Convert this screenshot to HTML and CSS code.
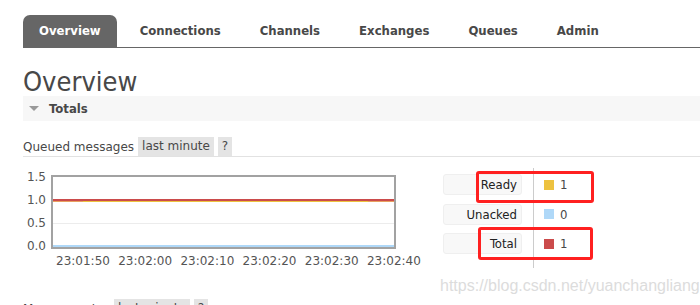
FILE: index.html
```html
<!DOCTYPE html>
<html lang="en">
<head>
    <meta charset="UTF-8">
    <meta name="viewport" content="width=device-width, initial-scale=1.0">
    <title>RabbitMQ Management</title>
    <link rel="stylesheet" href="styles.css">
</head>
<body>
    <div class="main">
        <ul class="tabs">
            <li class="active">Overview</li>
            <li>Connections</li>
            <li>Channels</li>
            <li>Exchanges</li>
            <li>Queues</li>
            <li>Admin</li>
        </ul>

        <h1>Overview</h1>

        <div class="section-title"><span class="arrow"></span>Totals</div>

        <div class="updatable">
            <span class="label">Queued messages</span>
            <span class="pill">last minute</span>
            <span class="pill">?</span>
        </div>

        <div class="chart-row">
            <div class="chart">
                <div class="plot">
                    <div class="y-axis">
                        <span>1.5</span>
                        <span>1.0</span>
                        <span>0.5</span>
                        <span>0.0</span>
                    </div>
                    <div class="plot-box">
                        <svg width="341" height="70" viewBox="0 0 341 70">
                            <line x1="0" y1="46.5" x2="341" y2="46.5" stroke="#ececec" stroke-width="1"/>
                            <line x1="0" y1="24.5" x2="341" y2="24.5" stroke="#e8a060" stroke-width="1"/>
                            <line x1="30" y1="24.5" x2="315" y2="24.5" stroke="#edc240" stroke-width="1"/>
                            <line x1="0" y1="23" x2="341" y2="23" stroke="#cb4b4b" stroke-width="2"/>
                            <line x1="0" y1="69" x2="341" y2="69" stroke="#afd8f8" stroke-width="2"/>
                        </svg>
                    </div>
                </div>
                <div class="x-axis">
                    <span>23:01:50</span>
                    <span>23:02:00</span>
                    <span>23:02:10</span>
                    <span>23:02:20</span>
                    <span>23:02:30</span>
                    <span>23:02:40</span>
                </div>
            </div>

            <div class="legend">
                <div class="legend-labels">
                    <div class="legend-label">Ready</div>
                    <div class="legend-label">Unacked</div>
                    <div class="legend-label">Total</div>
                </div>
                <div class="legend-values">
                    <div class="legend-value"><span class="swatch ready"></span>1</div>
                    <div class="legend-value"><span class="swatch unacked"></span>0</div>
                    <div class="legend-value"><span class="swatch total"></span>1</div>
                </div>
                <div class="mark mark-ready"></div>
                <div class="mark mark-total"></div>
                <div class="watermark">https://blog.csdn.net/yuanchangliang</div>
            </div>
        </div>

        <div class="updatable rates">
            <span class="label">Message rates</span>
            <span class="pill">last minute</span>
            <span class="pill">?</span>
        </div>
    </div>
</body>
</html>
```

FILE: styles.css
```css
body {
    margin: 0;
    padding: 0;
    background: #fff;
    color: #484848;
    font-family: "DejaVu Sans Condensed", "DejaVu Sans", Verdana, sans-serif;
    font-size: 13px;
    overflow: hidden;
}
.main {
    padding: 15px 0 0 23px;
}
.tabs {
    display: flex;
    gap: 7px;
    margin: 0;
    padding: 0;
    list-style: none;
    border-bottom: 1px solid #666;
}
.tabs li {
    height: 32px;
    line-height: 32px;
    padding: 0 16px;
    font-weight: bold;
    font-size: 13px;
    color: #484848;
    border-radius: 7px 7px 0 0;
}
.tabs li.active {
    background: #666;
    color: #fff;
}
h1 {
    margin: 19px 0 0;
    font-size: 27px;
    line-height: 29px;
    font-weight: normal;
    color: #484848;
}
.section-title {
    display: flex;
    align-items: center;
    height: 25px;
    background: #f7f7f7;
    font-weight: bold;
    font-size: 13px;
    padding-left: 6px;
}
.arrow {
    width: 0;
    height: 0;
    border-left: 5px solid transparent;
    border-right: 5px solid transparent;
    border-top: 5px solid #999;
    margin-right: 10px;
}
.updatable {
    display: flex;
    align-items: center;
    gap: 4px;
    height: 19px;
    margin-top: 16px;
    border-bottom: 1px solid #e2e2e2;
    font-family: "DejaVu Sans", Verdana, sans-serif;
    font-size: 12px;
}
.updatable.rates {
    margin-top: 31px;
}
.pill {
    background: #e4e4e4;
    line-height: 19px;
    padding: 0 4px;
}
.chart-row {
    display: flex;
    margin-top: 12px;
}
.chart {
    width: 420px;
    padding-top: 6px;
}
.plot {
    display: flex;
}
.y-axis {
    width: 23px;
    padding-right: 5px;
    display: flex;
    flex-direction: column;
    justify-content: space-between;
    align-items: flex-end;
    font-family: "DejaVu Sans", Verdana, sans-serif;
    font-size: 12px;
    line-height: 14px;
    color: #545454;
    margin: -5px 0 -4px;
}
.plot-box {
    border: 2px solid #a2a2a2;
    height: 70px;
    width: 341px;
}
.plot-box svg {
    display: block;
}
.x-axis {
    display: flex;
    margin: 5px 0 0 33px;
    font-family: "DejaVu Sans", Verdana, sans-serif;
    font-size: 12px;
    line-height: 14px;
    color: #545454;
    white-space: nowrap;
}
.x-axis span {
    width: 62.2px;
    flex: none;
}
.legend {
    position: relative;
    display: flex;
    padding: 5px 0 4px;
    font-size: 13px;
}
.legend-labels {
    display: flex;
    flex-direction: column;
    gap: 8.5px;
    margin-right: 11px;
}
.legend-label {
    width: 73px;
    height: 19px;
    line-height: 19px;
    text-align: right;
    padding-right: 4px;
    background: #f8f8f8;
    border: 1px solid #efefef;
    border-radius: 3px;
    color: #222;
}
.legend-values {
    display: flex;
    flex-direction: column;
    gap: 8.5px;
    border-left: 1px solid #ccc;
    padding: 6px 0 4px 10px;
    margin: -6px 0 -4px;
}
.legend-value {
    display: flex;
    align-items: center;
    height: 21px;
    color: #484848;
}
.swatch {
    width: 10px;
    height: 10px;
    margin-right: 6px;
}
.swatch.ready {
    background: #edc240;
}
.swatch.unacked {
    background: #afd8f8;
}
.swatch.total {
    background: #cb4b4b;
}
.mark {
    position: absolute;
    border: 3px solid #ff2020;
    border-radius: 3px;
}
.mark-ready {
    left: 33px;
    top: 2px;
    width: 112px;
    height: 26px;
}
.mark-total {
    left: 35px;
    top: 58px;
    width: 109px;
    height: 27px;
}
.watermark {
    position: absolute;
    left: -3px;
    top: 108px;
    white-space: nowrap;
    font-family: "Liberation Sans", Arial, sans-serif;
    font-size: 16px;
    color: #dcdcdc;
}
```
